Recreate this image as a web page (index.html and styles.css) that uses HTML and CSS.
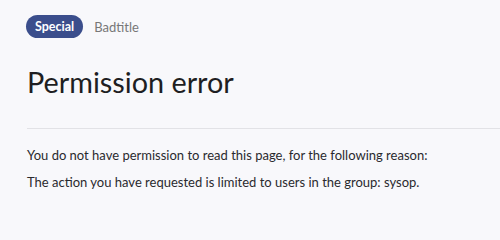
FILE: index.html
```html
<!DOCTYPE html>
<html>
<head>
<meta charset="utf-8">
<link rel="stylesheet" href="styles.css">
</head>
<body>
<div class="page">
  <div class="crumbs">
    <span class="badge">Special</span>
    <span class="crumb">Badtitle</span>
  </div>
  <h1 class="title">Permission error</h1>
  <hr class="rule">
  <p class="msg">You do not have permission to read this page, for the following reason:</p>
  <p class="msg">The action you have requested is limited to users in the group: sysop.</p>
</div>
</body>
</html>
```
FILE: styles.css
```css
html, body {
  margin: 0;
  padding: 0;
  background: #f8f8fb;
}
body {
  font-family: Lato, "Noto Sans", sans-serif;
  color: #222;
}
.page {
  padding: 15px 0 0 26px;
}
.crumbs {
  display: flex;
  align-items: center;
  gap: 11px;
  height: 23px;
}
.badge {
  background: #3b4e8c;
  color: #fff;
  font-weight: bold;
  font-size: 12.5px;
  border-radius: 12px;
  padding: 0 9px;
  height: 23px;
  line-height: 23px;
}
.crumb {
  color: #777;
  font-size: 13px;
}
.title {
  margin: 26px 0 0 1px;
  font-size: 28.8px;
  font-weight: normal;
  line-height: 36px;
  color: #1e1e22;
}
.rule {
  margin: 28px 0 0 1px;
  border: 0;
  height: 1px;
  background: #e2e2e6;
}
.msg {
  margin: 0 0 0 1px;
  font-size: 13px;
  line-height: 27px;
  color: #2a2a2e;
}
.rule + .msg {
  margin-top: 13px;
}
```
